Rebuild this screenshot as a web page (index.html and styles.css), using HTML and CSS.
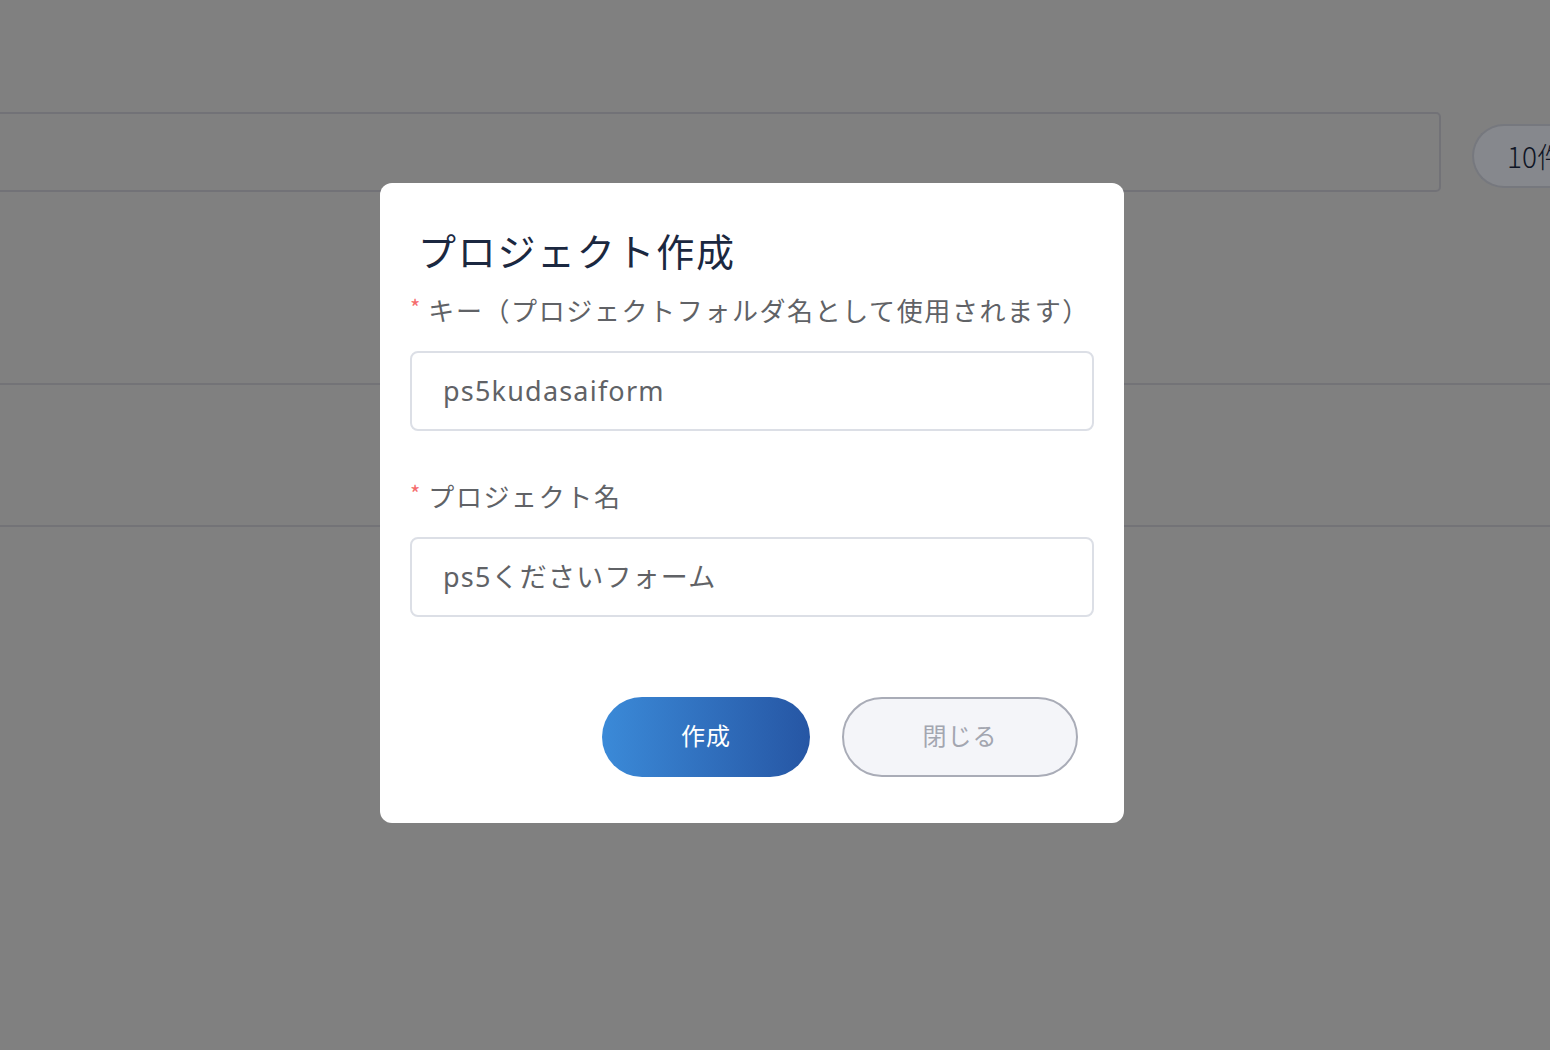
FILE: index.html
```html
<!DOCTYPE html>
<html lang="ja">
<head>
<meta charset="utf-8">
<title>プロジェクト作成</title>
<link rel="stylesheet" href="styles.css">
</head>
<body>
<div class="page">
  <div class="toolbar">
    <div class="search"></div>
    <div class="count-pill">10件</div>
  </div>
  <div class="rows">
    <div class="row"></div>
    <div class="row"></div>
  </div>
</div>

<div class="overlay">
  <div class="dialog">
    <h2 class="dialog-title">プロジェクト作成</h2>
    <div class="field">
      <label class="field-label"><span class="req">*</span>キー（プロジェクトフォルダ名として使用されます）</label>
      <div class="input">ps5kudasaiform</div>
    </div>
    <div class="field field-second">
      <label class="field-label"><span class="req">*</span>プロジェクト名</label>
      <div class="input">ps5くださいフォーム</div>
    </div>
    <div class="dialog-footer">
      <button class="btn btn-primary">作成</button>
      <button class="btn btn-secondary">閉じる</button>
    </div>
  </div>
</div>
</body>
</html>
```

FILE: styles.css
```css
* { box-sizing: border-box; }
html, body {
  margin: 0;
  padding: 0;
  width: 1550px;
  height: 1050px;
  overflow: hidden;
}
body {
  background: #808080;
  font-family: "Noto Sans", "Noto Sans CJK JP", sans-serif;
}
.page {
  padding-top: 112px;
}
.toolbar {
  display: flex;
  align-items: flex-start;
  gap: 31px;
  margin-left: -20px;
}
.search {
  width: 1461px;
  height: 80px;
  border: 2px solid #727277;
  border-radius: 5px;
  flex: none;
}
.count-pill {
  flex: none;
  margin-top: 12px;
  width: 120px;
  height: 64px;
  border: 2px solid #76787e;
  border-radius: 32px 0 0 32px;
  border-right: none;
  background: #86888d;
  color: #0f1525;
  font-size: 28px;
  line-height: 60px;
  padding-left: 33px;
  white-space: nowrap;
  font-family: "Noto Sans CJK JP", sans-serif;
  font-weight: 300;
}
.rows {
  margin-top: 191px;
}
.row {
  height: 142px;
  border-top: 2px solid #737377;
}

.overlay {
  position: fixed;
  inset: 0;
}
.dialog {
  margin: 183px 0 0 380px;
  width: 744px;
  height: 640px;
  background: #fff;
  border-radius: 12px;
  padding: 45px 30px 46px;
  display: flex;
  flex-direction: column;
}
.dialog-title {
  margin: 0 0 0 8px;
  font-family: "Noto Sans CJK JP", sans-serif;
  font-weight: 400;
  font-size: 38px;
  line-height: 44px;
  letter-spacing: 1.7px;
  color: #1b2840;
}
.field {
  margin-top: 20px;
}
.field-second {
  margin-top: 47px;
}
.field-label {
  display: block;
  font-family: "Noto Sans CJK JP", sans-serif;
  font-size: 26px;
  line-height: 36px;
  letter-spacing: 1.6px;
  color: #606266;
}
.req {
  color: #f56c6c;
  font-size: 22px;
  vertical-align: top;
  margin-right: 8px;
  margin-left: 0;
  position: relative;
  top: -4px;
  letter-spacing: 0;
}
.input {
  margin-top: 23px;
  height: 80px;
  border: 2px solid #dcdfe6;
  border-radius: 8px;
  padding: 0 31px;
  font-size: 27px;
  line-height: 76px;
  color: #606266;
  letter-spacing: 1.2px;
}
.dialog-footer {
  margin-top: 80px;
  display: flex;
  justify-content: flex-end;
  gap: 32px;
  padding-right: 16px;
}
.btn {
  height: 80px;
  border-radius: 40px;
  font-family: "Noto Sans CJK JP", sans-serif;
  font-size: 24px;
  line-height: 1;
  padding: 0 0 4px;
  letter-spacing: 1px;
  cursor: pointer;
}
.btn-primary {
  width: 208px;
  border: none;
  background: linear-gradient(90deg, #3b8ad8 0%, #2656a4 100%);
  color: #fff;
}
.btn-secondary {
  width: 236px;
  border: 2px solid #a9acb7;
  background: #f4f5f9;
  color: #a3a6b0;
}
```
